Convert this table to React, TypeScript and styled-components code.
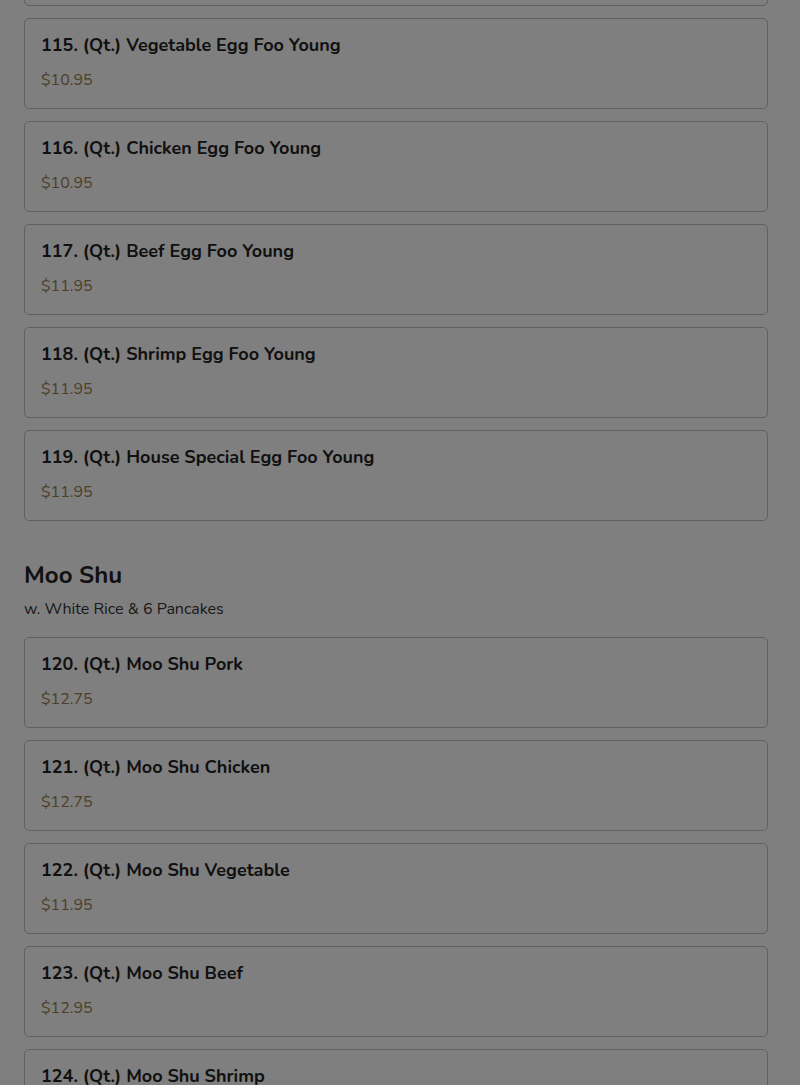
import React from 'react'
import styled, { createGlobalStyle } from 'styled-components'

const GlobalStyle = createGlobalStyle`
  html, body { margin: 0; padding: 0; background: #ffffff; }
  body { font-family: Nunito, Lato, "Noto Sans", sans-serif; color: #222222; }
`

interface IItem {
  name: string
  price: string
}

interface ISection {
  title?: string
  note?: string
  items: IItem[]
}

const sections: ISection[] = [
  {
    items: [
      { name: '114. (Qt.) Pork Egg Foo Young', price: '$10.95' },
      { name: '115. (Qt.) Vegetable Egg Foo Young', price: '$10.95' },
      { name: '116. (Qt.) Chicken Egg Foo Young', price: '$10.95' },
      { name: '117. (Qt.) Beef Egg Foo Young', price: '$11.95' },
      { name: '118. (Qt.) Shrimp Egg Foo Young', price: '$11.95' },
      { name: '119. (Qt.) House Special Egg Foo Young', price: '$11.95' },
    ],
  },
  {
    title: 'Moo Shu',
    note: 'w. White Rice & 6 Pancakes',
    items: [
      { name: '120. (Qt.) Moo Shu Pork', price: '$12.75' },
      { name: '121. (Qt.) Moo Shu Chicken', price: '$12.75' },
      { name: '122. (Qt.) Moo Shu Vegetable', price: '$11.95' },
      { name: '123. (Qt.) Moo Shu Beef', price: '$12.95' },
      { name: '124. (Qt.) Moo Shu Shrimp', price: '$13.95' },
    ],
  },
]

// page is scrolled: the card above 115 only shows its bottom edge
const Page = styled.div`
  padding: 0 32px 0 24px;
  margin-top: -85px;
`

const Section = styled.section`
  & + & { margin-top: 38px; }
`

const SectionTitle = styled.h2`
  margin: 0;
  font-size: 24px;
  line-height: 32px;
  font-weight: 700;
  color: #222222;
`

const SectionNote = styled.p`
  margin: 6px 0 16px;
  font-size: 16px;
  line-height: 24px;
  color: #333333;
`

const List = styled.div`
  display: flex;
  flex-direction: column;
  gap: 12px;
`

const Card = styled.div`
  border: 1px solid #c0c0c0;
  border-radius: 5px;
  padding: 12px 16px 16px;
  display: flex;
  flex-direction: column;
  gap: 9px;
`

const ItemName = styled.div`
  font-size: 18px;
  line-height: 28px;
  font-weight: 700;
  color: #222222;
`

const Price = styled.div`
  font-size: 16px;
  line-height: 24px;
  color: #9a8050;
`

const Overlay = styled.div`
  position: fixed;
  inset: 0;
  background: rgba(0, 0, 0, 0.5);
  pointer-events: none;
`

export default function App() {
  return (
    <>
      <GlobalStyle />
      <Page>
        {sections.map((section, i) => (
          <Section key={i}>
            {section.title && <SectionTitle>{section.title}</SectionTitle>}
            {section.note && <SectionNote>{section.note}</SectionNote>}
            <List>
              {section.items.map((item) => (
                <Card key={item.name}>
                  <ItemName>{item.name}</ItemName>
                  <Price>{item.price}</Price>
                </Card>
              ))}
            </List>
          </Section>
        ))}
      </Page>
      <Overlay />
    </>
  )
}
